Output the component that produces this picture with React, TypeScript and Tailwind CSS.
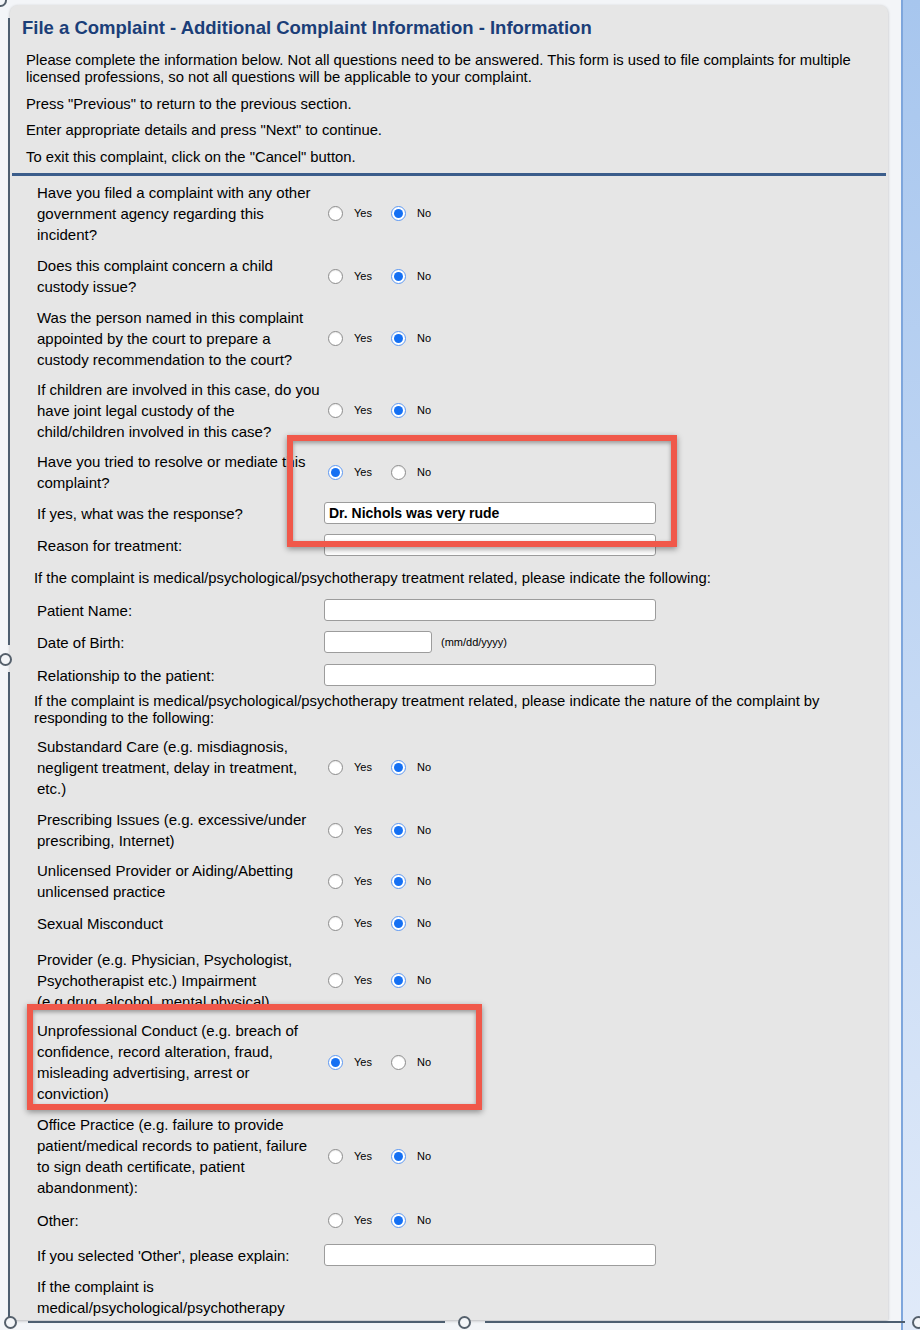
import React from 'react';

type Item =
  | { kind: 'radio'; mt: string; lines: string[]; yes?: boolean }
  | { kind: 'input'; mt: string; label: string; value?: string; short?: boolean }
  | { kind: 'para'; mt: string; lines: string[] }
  | { kind: 'label'; mt: string; lines: string[] };

const ITEMS: Item[] = [
  {
    kind: 'radio',
    mt: 'mt-[6px]',
    lines: ['Have you filed a complaint with any other', 'government agency regarding this', 'incident?'],
  },
  { kind: 'radio', mt: 'mt-[10px]', lines: ['Does this complaint concern a child', 'custody issue?'] },
  {
    kind: 'radio',
    mt: 'mt-[10px]',
    lines: ['Was the person named in this complaint', 'appointed by the court to prepare a', 'custody recommendation to the court?'],
  },
  {
    kind: 'radio',
    mt: 'mt-[9px]',
    lines: ['If children are involved in this case, do you', 'have joint legal custody of the', 'child/children involved in this case?'],
  },
  { kind: 'radio', mt: 'mt-[9px]', lines: ['Have you tried to resolve or mediate this', 'complaint?'], yes: true },
  { kind: 'input', mt: 'mt-[9px]', label: 'If yes, what was the response?', value: 'Dr. Nichols was very rude' },
  { kind: 'input', mt: 'mt-[10px]', label: 'Reason for treatment:' },
  {
    kind: 'para',
    mt: 'mt-[14px]',
    lines: ['If the complaint is medical/psychological/psychotherapy treatment related, please indicate the following:'],
  },
  { kind: 'input', mt: 'mt-[12px]', label: 'Patient Name:' },
  { kind: 'input', mt: 'mt-[10px]', label: 'Date of Birth:', short: true },
  { kind: 'input', mt: 'mt-[11px]', label: 'Relationship to the patient:' },
  {
    kind: 'para',
    mt: 'mt-[7px]',
    lines: [
      'If the complaint is medical/psychological/psychotherapy treatment related, please indicate the nature of the complaint by',
      'responding to the following:',
    ],
  },
  {
    kind: 'radio',
    mt: 'mt-[9px]',
    lines: ['Substandard Care (e.g. misdiagnosis,', 'negligent treatment, delay in treatment,', 'etc.)'],
  },
  { kind: 'radio', mt: 'mt-[10px]', lines: ['Prescribing Issues (e.g. excessive/under', 'prescribing, Internet)'] },
  { kind: 'radio', mt: 'mt-[9px]', lines: ['Unlicensed Provider or Aiding/Abetting', 'unlicensed practice'] },
  { kind: 'radio', mt: 'mt-[11px]', lines: ['Sexual Misconduct'] },
  {
    kind: 'radio',
    mt: 'mt-[15px]',
    lines: ['Provider (e.g. Physician, Psychologist,', 'Psychotherapist etc.) Impairment', '(e.g drug, alcohol, mental,physical)'],
  },
  {
    kind: 'radio',
    mt: 'mt-[8px]',
    lines: [
      'Unprofessional Conduct (e.g. breach of',
      'confidence, record alteration, fraud,',
      'misleading advertising, arrest or',
      'conviction)',
    ],
    yes: true,
  },
  {
    kind: 'radio',
    mt: 'mt-[10px]',
    lines: [
      'Office Practice (e.g. failure to provide',
      'patient/medical records to patient, failure',
      'to sign death certificate, patient',
      'abandonment):',
    ],
  },
  { kind: 'radio', mt: 'mt-[12px]', lines: ['Other:'] },
  { kind: 'input', mt: 'mt-[13px]', label: "If you selected 'Other', please explain:" },
  { kind: 'label', mt: 'mt-[10px]', lines: ['If the complaint is', 'medical/psychological/psychotherapy'] },
];

const Radio = ({ on }: { on?: boolean }) =>
  on ? (
    <span className="flex h-[15px] w-[15px] shrink-0 items-center justify-center rounded-full border border-[#5b97f2] bg-white">
      <span className="h-[9px] w-[9px] rounded-full bg-[#1570f3]" />
    </span>
  ) : (
    <span className="block h-[15px] w-[15px] shrink-0 rounded-full border border-[#8c8c8c] bg-white shadow-[inset_0_1px_1px_rgba(0,0,0,0.08)]" />
  );

const YesNo = ({ yes }: { yes?: boolean }) => (
  <div className="ml-[4px] flex items-center text-[11px] text-black">
    <Radio on={yes} />
    <span className="ml-[11px]">Yes</span>
    <span className="ml-[19px] flex">
      <Radio on={!yes} />
    </span>
    <span className="ml-[11px]">No</span>
  </div>
);

const Lines = ({ lines }: { lines: string[] }) => (
  <>
    {lines.map((l) => (
      <div key={l} className="whitespace-nowrap">
        {l}
      </div>
    ))}
  </>
);

const Row = ({ item }: { item: Item }) => {
  if (item.kind === 'para') {
    return (
      <div className={`${item.mt} ml-[24px] text-[14.8px] leading-[17px]`}>
        <Lines lines={item.lines} />
      </div>
    );
  }
  if (item.kind === 'label') {
    return (
      <div className={`${item.mt} ml-[27px] text-[15px] leading-[21px]`}>
        <Lines lines={item.lines} />
      </div>
    );
  }
  if (item.kind === 'input') {
    return (
      <div className={`${item.mt} ml-[27px] flex h-[22px] items-center`}>
        <div className="w-[287px] shrink-0 whitespace-nowrap text-[15px] leading-[21px]">{item.label}</div>
        {item.short ? (
          <>
            <div className="h-[22px] w-[108px] rounded-[3px] border border-[#9c9c9c] bg-white" />
            <span className="ml-[9px] text-[11px]">(mm/dd/yyyy)</span>
          </>
        ) : (
          <div className="flex h-[22px] w-[332px] items-center rounded-[3px] border border-[#9c9c9c] bg-white pl-[4px] text-[14px] font-bold">
            {item.value}
          </div>
        )}
      </div>
    );
  }
  return (
    <div className={`${item.mt} ml-[27px] flex items-center`}>
      <div className="w-[287px] shrink-0 text-[15px] leading-[21px]">
        <Lines lines={item.lines} />
      </div>
      <YesNo yes={item.yes} />
    </div>
  );
};

const App = () => {
  return (
    <div className="relative flex h-[1330px] w-[920px] overflow-hidden bg-[#f3f5f8] font-['Liberation_Sans',Arial,sans-serif] text-black">
      {/* main panel */}
      <div className="ml-[10px] mt-[5px] h-[1315px] w-[878px] shrink-0 overflow-hidden rounded-t-[8px] bg-[#e6e6e6] shadow-[0_1px_3px_rgba(0,0,0,0.25)]">
        <h1 className="ml-[12px] mt-[12px] whitespace-nowrap text-[18.5px] font-bold leading-[22px] text-[#1b3e78]">
          File a Complaint - Additional Complaint Information - Information
        </h1>
        <div className="ml-[16px] text-[14.8px] leading-[17px]">
          <div className="mt-[13px]">
            <Lines
              lines={[
                'Please complete the information below. Not all questions need to be answered. This form is used to file complaints for multiple',
                'licensed professions, so not all questions will be applicable to your complaint.',
              ]}
            />
          </div>
          <p className="mt-[10px]">Press "Previous" to return to the previous section.</p>
          <p className="mt-[9px]">Enter appropriate details and press "Next" to continue.</p>
          <p className="mt-[10px]">To exit this complaint, click on the "Cancel" button.</p>
        </div>
        <div className="mx-[2px] mt-[7px] h-[3px] bg-[#3b5d8b]" />

        {ITEMS.map((item, i) => (
          <Row key={i} item={item} />
        ))}
      </div>

      {/* right side bar */}
      <div className="ml-[13px] h-full w-[19px] shrink-0 border-l-2 border-[#7ea6dc] bg-gradient-to-b from-[#a7c6ee] to-[#e0eaf9]" />

      {/* highlight boxes */}
      <div className="absolute left-[287px] top-[435px] h-[112px] w-[390px] border-[6px] border-[#f0584a] shadow-[0_2px_6px_rgba(0,0,0,0.4),inset_0_2px_4px_rgba(0,0,0,0.35)]" />
      <div className="absolute left-[27px] top-[1004px] h-[106px] w-[455px] border-[6px] border-[#f0584a] shadow-[0_2px_6px_rgba(0,0,0,0.4),inset_0_2px_4px_rgba(0,0,0,0.35)]" />

      {/* selection frame */}
      <div className="absolute left-[8px] top-[18px] h-[627px] w-[2px] bg-[#4d5e70]" />
      <div className="absolute left-[8px] top-[672px] h-[645px] w-[2px] bg-[#4d5e70]" />
      <div className="absolute left-[-1px] top-[653px] h-[13px] w-[13px] rounded-full border-2 border-[#55606c] bg-[#f3f5f8]" />
      <div className="absolute left-[-6px] top-[-6px] h-[13px] w-[13px] rounded-full border-2 border-[#55606c] bg-[#f3f5f8]" />
      <div className="absolute left-[28px] top-[1321px] h-[2px] w-[417px] bg-[#4d5e70]" />
      <div className="absolute left-[485px] top-[1321px] h-[2px] w-[420px] bg-[#4d5e70]" />
      <div className="absolute left-[4px] top-[1316px] h-[13px] w-[13px] rounded-full border-2 border-[#55606c] bg-[#f3f5f8]" />
      <div className="absolute left-[458px] top-[1316px] h-[13px] w-[13px] rounded-full border-2 border-[#55606c] bg-[#f3f5f8]" />
      <div className="absolute left-[912px] top-[1316px] h-[13px] w-[13px] rounded-full border-2 border-[#55606c] bg-[#f3f5f8]" />
    </div>
  );
};

export default App;
